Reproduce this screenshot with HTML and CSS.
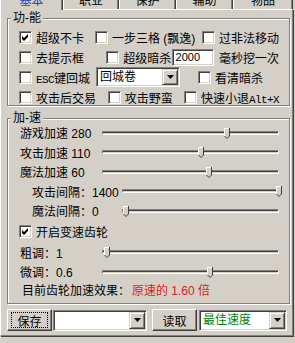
FILE: index.html
```html
<!DOCTYPE html>
<html lang="zh-CN">
<head>
    <meta charset="UTF-8">
    <title>基本设置</title>
    <link rel="stylesheet" href="styles.css">
</head>
<body>
    <div class="tabs">
        <div class="tab tab-1 active">基本</div>
        <div class="tab tab-2">职业</div>
        <div class="tab tab-3">保护</div>
        <div class="tab tab-4">辅助</div>
        <div class="tab tab-5">物品</div>
    </div>

    <div class="panel">
        <!-- 功能 -->
        <div class="group group-func">
            <div class="group-title">功-能</div>
            <div class="rows">
                <div class="row">
                    <label class="check w78"><span class="box"><svg width="7" height="7" viewBox="0 0 7 7"><path d="M0 2L2 4L6 0V3L2 7L0 5Z" fill="#000"/></svg></span><span>超级不卡</span></label>
                    <label class="check w110"><span class="box"></span><span>一步三格 (飘逸)</span></label>
                    <label class="check"><span class="box"></span><span>过非法移动</span></label>
                </div>
                <div class="row">
                    <label class="check w91"><span class="box"></span><span>去提示框</span></label>
                    <label class="check w68"><span class="box"></span><span>超级暗杀</span></label>
                    <div class="input">2000</div>
                    <span class="after-input">毫秒挖一次</span>
                </div>
                <div class="row">
                    <label class="check w77"><span class="box"></span><span><span class="mono">ESC</span>键回城</span></label>
                    <div class="select select-city">
                        <span class="value">回城卷</span>
                        <span class="arrow"><svg width="7" height="4" viewBox="0 0 7 4"><path d="M0 0H7L3.5 4Z" fill="#000"/></svg></span>
                    </div>
                    <label class="check look"><span class="box"></span><span>看清暗杀</span></label>
                </div>
                <div class="row">
                    <label class="check w91"><span class="box"></span><span>攻击后交易</span></label>
                    <label class="check w78"><span class="box"></span><span>攻击野蛮</span></label>
                    <label class="check"><span class="box"></span><span>快速小退<span class="mono">Alt+X</span></span></label>
                </div>
            </div>
        </div>

        <!-- 加速 -->
        <div class="group group-speed">
            <div class="group-title">加-速</div>
            <div class="rows rows-speed">
                <div class="slider">
                    <span class="slider-label">游戏加速 280</span>
                    <div class="track"><span class="thumb" style="left: 121px"><svg width="6" height="11" viewBox="0 0 6 11"><path d="M0 0H6V8L3 11L0 8Z" fill="#d4d0c8"/><path d="M0.5 8V0.5H5" stroke="#fff" fill="none"/><path d="M5.5 0V8L3 10.5L0.5 8" stroke="#404040" fill="none"/></svg></span></div>
                </div>
                <div class="slider">
                    <span class="slider-label">攻击加速 110</span>
                    <div class="track"><span class="thumb" style="left: 95px"><svg width="6" height="11" viewBox="0 0 6 11"><path d="M0 0H6V8L3 11L0 8Z" fill="#d4d0c8"/><path d="M0.5 8V0.5H5" stroke="#fff" fill="none"/><path d="M5.5 0V8L3 10.5L0.5 8" stroke="#404040" fill="none"/></svg></span></div>
                </div>
                <div class="slider">
                    <span class="slider-label">魔法加速 60</span>
                    <div class="track"><span class="thumb" style="left: 103px"><svg width="6" height="11" viewBox="0 0 6 11"><path d="M0 0H6V8L3 11L0 8Z" fill="#d4d0c8"/><path d="M0.5 8V0.5H5" stroke="#fff" fill="none"/><path d="M5.5 0V8L3 10.5L0.5 8" stroke="#404040" fill="none"/></svg></span></div>
                </div>
                <div class="slider sub">
                    <span class="slider-label">攻击间隔：1400</span>
                    <div class="track"><span class="thumb" style="left: 153px"><svg width="6" height="11" viewBox="0 0 6 11"><path d="M0 0H6V8L3 11L0 8Z" fill="#d4d0c8"/><path d="M0.5 8V0.5H5" stroke="#fff" fill="none"/><path d="M5.5 0V8L3 10.5L0.5 8" stroke="#404040" fill="none"/></svg></span></div>
                </div>
                <div class="slider sub">
                    <span class="slider-label">魔法间隔：0</span>
                    <div class="track"><span class="thumb" style="left: 0px"><svg width="6" height="11" viewBox="0 0 6 11"><path d="M0 0H6V8L3 11L0 8Z" fill="#d4d0c8"/><path d="M0.5 8V0.5H5" stroke="#fff" fill="none"/><path d="M5.5 0V8L3 10.5L0.5 8" stroke="#404040" fill="none"/></svg></span></div>
                </div>
                <div class="row row-gear">
                    <label class="check"><span class="box"><svg width="7" height="7" viewBox="0 0 7 7"><path d="M0 2L2 4L6 0V3L2 7L0 5Z" fill="#000"/></svg></span><span>开启变速齿轮</span></label>
                </div>
                <div class="slider">
                    <span class="slider-label">粗调：1</span>
                    <div class="track"><span class="thumb" style="left: 1px"><svg width="6" height="11" viewBox="0 0 6 11"><path d="M0 0H6V8L3 11L0 8Z" fill="#d4d0c8"/><path d="M0.5 8V0.5H5" stroke="#fff" fill="none"/><path d="M5.5 0V8L3 10.5L0.5 8" stroke="#404040" fill="none"/></svg></span></div>
                </div>
                <div class="slider">
                    <span class="slider-label">微调：0.6</span>
                    <div class="track"><span class="thumb" style="left: 104px"><svg width="6" height="11" viewBox="0 0 6 11"><path d="M0 0H6V8L3 11L0 8Z" fill="#d4d0c8"/><path d="M0.5 8V0.5H5" stroke="#fff" fill="none"/><path d="M5.5 0V8L3 10.5L0.5 8" stroke="#404040" fill="none"/></svg></span></div>
                </div>
                <div class="summary">目前齿轮加速效果：<span class="rate">原速的 1.60 倍</span></div>
            </div>
        </div>

        <div class="bottom">
            <button class="btn btn-save"><span class="focus">保存</span></button>
            <div class="select select-plan">
                <span class="value"></span>
                <span class="arrow"><svg width="7" height="4" viewBox="0 0 7 4"><path d="M0 0H7L3.5 4Z" fill="#000"/></svg></span>
            </div>
            <button class="btn btn-load">读取</button>
            <div class="select select-mode">
                <span class="value green">最佳速度</span>
                <span class="arrow"><svg width="7" height="4" viewBox="0 0 7 4"><path d="M0 0H7L3.5 4Z" fill="#000"/></svg></span>
            </div>
        </div>
    </div>
</body>
</html>
```

FILE: styles.css
```css
* {
    margin: 0;
    padding: 0;
    box-sizing: border-box;
}

body {
    width: 295px;
    height: 343px;
    overflow: hidden;
    background: #d4d0c8;
    font-family: "Liberation Sans", "Noto Sans CJK SC", sans-serif;
    font-size: 12px;
    color: #000;
}

/* 标签页 */
.tabs {
    display: flex;
    align-items: flex-start;
    height: 18px;
    margin-top: -9px;
    position: relative;
    z-index: 1;
}

.tab {
    height: 18px;
    line-height: 18px;
    text-align: center;
    border-top: 1px solid #fff;
    border-left: 1px solid #fff;
    border-right: 1px solid #404040;
    box-shadow: inset -1px 0 0 #808080;
    background: #d4d0c8;
}

.tab-1 { width: 63px; }
.tab-2 { width: 56px; }
.tab-3 { width: 57px; }
.tab-4 { width: 57px; }
.tab-5 { width: 60px; }

.tab.active {
    height: 20px;
    line-height: 20px;
    margin-top: -1px;
    color: #1f3fd0;
}

.panel {
    width: 293px;
    height: 327px;
    border-top: 1px solid #fff;
    border-left: 1px solid #fff;
    border-right: 1px solid #808080;
    border-bottom: 1px solid #808080;
    box-shadow: 1px 1px 0 #404040;
    padding: 8px 0 0 6px;
}

/* 分组框 */
.group {
    width: 283px;
    border: 1px solid #808080;
    box-shadow: inset 1px 1px 0 #fff, 1px 1px 0 #fff;
    padding: 0 10px 0 11px;
}

.group-func {
    height: 88px;
}

.group-speed {
    height: 186px;
    margin-top: 12px;
}

.group-title {
    width: fit-content;
    margin: -8px 0 0 -8px;
    padding: 0 2px;
    line-height: 14px;
    background: #d4d0c8;
}

.rows {
    padding-top: 2px;
}

.rows-speed {
    padding-top: 0;
    margin-top: -2px;
}

.row {
    display: flex;
    align-items: center;
    height: 20px;
    white-space: nowrap;
}

.row-gear {
    height: 22px;
}

.check {
    display: flex;
    align-items: center;
    gap: 4px;
}

.w68 { width: 68px; }
.w77 { width: 77px; }
.w78 { width: 78px; }
.w91 { width: 91px; }
.w110 { width: 110px; }

.look {
    margin-left: 18px;
}

.box {
    width: 13px;
    height: 13px;
    flex: none;
    display: flex;
    align-items: center;
    justify-content: center;
    background: #fff;
    border: 1px solid;
    border-color: #808080 #fff #fff #808080;
    box-shadow: inset 1px 1px 0 #404040, inset -1px -1px 0 #d4d0c8;
}

.mono {
    font-family: "Liberation Mono", monospace;
    font-size: 11px;
    letter-spacing: -0.6px;
}

.input {
    width: 44px;
    height: 17px;
    padding-left: 3px;
    line-height: 14px;
    font-size: 11px;
    background: #fff;
    border: 1px solid;
    border-color: #808080 #fff #fff #808080;
    box-shadow: inset 1px 1px 0 #404040, inset -1px -1px 0 #d4d0c8;
}

.after-input {
    margin-left: 5px;
}

/* 下拉框 */
.select {
    display: flex;
    align-items: stretch;
    height: 20px;
    background: #fff;
    border: 1px solid;
    border-color: #808080 #fff #fff #808080;
    box-shadow: inset 1px 1px 0 #404040, inset -1px -1px 0 #d4d0c8;
    padding: 1px;
}

.select .value {
    flex: 1;
    padding-left: 2px;
    line-height: 16px;
}

.select .arrow {
    width: 16px;
    display: flex;
    align-items: center;
    justify-content: center;
    background: #d4d0c8;
    border: 1px solid;
    border-color: #d4d0c8 #404040 #404040 #d4d0c8;
    box-shadow: inset 1px 1px 0 #fff, inset -1px -1px 0 #808080;
}

.select-city {
    width: 84px;
}

.select-plan {
    width: 94px;
    height: 21px;
    margin-left: 1px;
}

.select-mode {
    width: 88px;
    height: 21px;
    margin-left: 2px;
}

.green {
    color: #008000;
}

/* 滑块 */
.slider {
    display: flex;
    align-items: center;
    height: 19.5px;
}

.slider-label {
    width: 83px;
    padding-left: 1px;
    white-space: nowrap;
}

.slider.sub .slider-label {
    width: 103px;
    padding-left: 13px;
}

.track {
    flex: 1;
    height: 4px;
    position: relative;
    border: 1px solid;
    border-color: #808080 #fff #fff #808080;
    box-shadow: inset 0 1px 0 #404040;
}

.thumb {
    position: absolute;
    top: -4px;
    width: 6px;
    height: 11px;
    display: block;
}

.thumb svg {
    display: block;
}

.summary {
    height: 18px;
    line-height: 18px;
    padding-left: 3px;
    white-space: nowrap;
}

.rate {
    margin-left: 2px;
    color: #e01818;
}

/* 底部按钮 */
.bottom {
    display: flex;
    align-items: center;
    margin-top: 5px;
}

.btn {
    height: 22px;
    width: 45px;
    font-family: inherit;
    font-size: 12px;
    background: #d4d0c8;
    border: 1px solid;
    border-color: #fff #404040 #404040 #fff;
    box-shadow: inset -1px -1px 0 #808080;
    display: flex;
    align-items: center;
    justify-content: center;
}

.btn-save .focus {
    display: flex;
    align-items: center;
    justify-content: center;
    width: 37px;
    height: 16px;
    border: 1px dotted #000;
}

.btn-load {
    margin-left: 5px;
}
```
